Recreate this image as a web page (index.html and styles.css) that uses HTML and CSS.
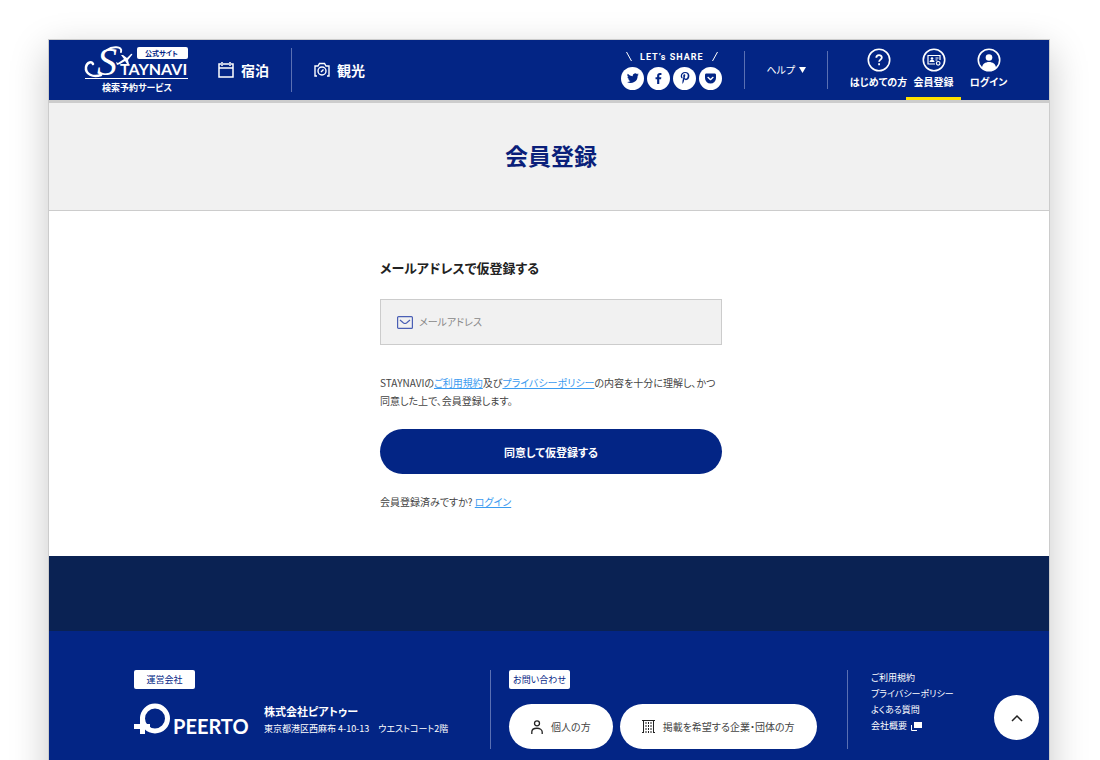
FILE: index.html
```html
<!DOCTYPE html>
<html lang="ja">
<head>
    <meta charset="UTF-8">
    <meta name="viewport" content="width=device-width, initial-scale=1.0">
    <title>会員登録 | STAYNAVI</title>
    <link rel="stylesheet" href="styles.css">
</head>
<body>
    <div class="page">
        <header class="header">
            <a class="logo" href="#">
                <svg width="104" height="48" viewBox="0 0 104 48" fill="#fff" aria-label="STAYNAVI 公式サイト 検索予約サービス">
                    <!-- swash -->
                    <path d="M16 29C8 32 0 28 1 21C2 16 7 15 8 18" fill="none" stroke="#fff" stroke-width="2.500" stroke-linecap="round"/>
                    <path d="M22 4C27 0 38 0 36 6" fill="none" stroke="#fff" stroke-width="2" stroke-linecap="round"/>
                    <text class="logo-s" x="12" y="29">S</text>
                    <!-- plane -->
                    <path d="M33 17L39 13L36 9L38 9L42 12L46 8Q48 7 47 9L43 14L44 18L42 18L40 15L35 18L32 19L31 16Z"/>
                    <text class="logo-name" x="35" y="29">TAYNAVI</text>
                    <rect x="52" y="1" width="51" height="12" rx="2"/>
                    <text class="logo-tag" x="60" y="10">公式サイト</text>
                    <path d="M0 32h103v1H0z"/>
                    <text class="logo-sub" x="17" y="45">検索予約サービス</text>
                </svg>
            </a>
            <nav class="nav">
                <a href="#">
                    <svg width="16" height="16" viewBox="0 0 16 16" fill="none" stroke="#fff" stroke-width="1.500">
                        <path d="M3 2H1v13h14V2h-2M5 2h6M1 6h14M4 0v4M12 0v4"/>
                    </svg>
                    宿泊
                </a>
                <a href="#">
                    <svg width="16" height="16" viewBox="0 0 16 16" fill="none" stroke="#fff" stroke-width="1.400">
                        <path d="M3 14H1V4h3l1.500-2.500h5L12 4h3v10h-2"/>
                        <circle cx="8" cy="9" r="4"/>
                        <path d="M7 10L9.500 7.500"/>
                    </svg>
                    観光
                </a>
            </nav>
            <div class="share">
                <p class="share-title">
                    <svg width="6" height="9" viewBox="0 0 6 9" stroke="#fff"><path d="M.5 0l5 9"/></svg>
                    LET’s SHARE
                    <svg width="6" height="9" viewBox="0 0 6 9" stroke="#fff"><path d="M5.500 0l-5 9"/></svg>
                </p>
                <div class="share-list">
                    <a href="#" aria-label="Twitter">
                        <svg width="12" height="12" viewBox="0 0 24 24"><path d="M23.600 4.900a9.600 9.600 0 0 1-2.800.8 4.900 4.900 0 0 0 2.100-2.700 9.700 9.700 0 0 1-3.100 1.200A4.900 4.900 0 0 0 11.500 8.600 13.800 13.800 0 0 1 1.500 3.500a4.900 4.900 0 0 0 1.500 6.500 4.900 4.900 0 0 1-2.200-.6v.1a4.900 4.900 0 0 0 3.900 4.800 4.900 4.900 0 0 1-2.200.1 4.900 4.900 0 0 0 4.500 3.400A9.800 9.800 0 0 1 0 19.900 13.900 13.900 0 0 0 21.200 7.500a9.900 9.900 0 0 0 2.400-2.600z"/></svg>
                    </a>
                    <a href="#" aria-label="Facebook">
                        <svg width="11" height="11" viewBox="0 0 24 24"><path d="M9 24V13.500H5.500V9H9V6c0-4 2.500-6 6-6 1.600 0 3 .1 3.400.2v4H16c-1.900 0-2.300.9-2.300 2.200V9h4.500l-.6 4.500h-3.900V24z"/></svg>
                    </a>
                    <a href="#" aria-label="Pinterest">
                        <svg width="12" height="12" viewBox="0 0 24 24"><path d="M12.500 0C6.500 0 3.500 4.200 3.500 8c0 2.300.8 4.300 2.700 5 .3.100.6 0 .7-.3l.3-1.100c.1-.3 0-.5-.2-.8-.5-.7-.9-1.500-.9-2.700 0-3.300 2.500-6 6.200-6 3.400 0 5.200 2 5.200 4.800 0 3.600-1.600 6.600-4 6.600-1.300 0-2.300-1.100-2-2.400.4-1.600 1.100-3.300 1.100-4.500 0-1-.6-1.900-1.700-1.900-1.400 0-2.500 1.400-2.500 3.400 0 1.200.4 2 .4 2L7 17.300c-.5 2-.1 4.500 0 6.700 1.500-1.800 2.400-4 2.900-6l.8-3.300c.5 1 1.800 1.700 3.100 1.700 4.100 0 7-3.800 7-8.800C20.800 3.400 17.500 0 12.500 0z"/></svg>
                    </a>
                    <a href="#" aria-label="Pocket">
                        <svg width="11" height="11" viewBox="0 0 24 24"><path d="M3 1h18c1.500 0 3 1.200 3 3v7a12 12 0 0 1-24 0V4c0-1.700 1.300-3 3-3z"/><path d="M6.500 9.500l5.500 5 5.500-5" fill="none" stroke="#fff" stroke-width="3" stroke-linecap="round" stroke-linejoin="round"/></svg>
                    </a>
                </div>
            </div>
            <div class="help">
                <button type="button">ヘルプ
                    <svg width="7" height="6" viewBox="0 0 7 6" fill="#fff"><path d="M0 0h7L3.500 6z"/></svg>
                </button>
            </div>
            <nav class="user-nav">
                <a href="#">
                    <svg width="24" height="24" viewBox="0 0 24 24" fill="none" stroke="#fff" stroke-width="1.800">
                        <circle cx="12" cy="12" r="10.700" stroke-width="1.600"/>
                        <path d="M9.300 9.800c0-3.700 5.500-3.500 5.500-.3 0 2-2.700 2.200-2.700 4.300M12.100 15.300v2"/>
                    </svg>
                    はじめての方
                </a>
                <a class="active" href="#">
                    <svg width="24" height="24" viewBox="0 0 24 24" fill="none" stroke="#fff" stroke-width="1.200">
                        <circle cx="12" cy="12" r="10.700" stroke-width="1.600"/>
                        <path d="M13 16H6V7.500h12V12M13.500 10h3M13.500 12h2"/>
                        <circle cx="10" cy="10.500" r="1.300" fill="#fff" stroke="none"/>
                        <path d="M7.500 14c0-3 5-3 5 0z" fill="#fff" stroke="none"/>
                        <circle cx="16.200" cy="15.300" r="1.800"/>
                    </svg>
                    会員登録
                </a>
                <a href="#">
                    <svg width="24" height="24" viewBox="0 0 24 24" fill="#fff">
                        <circle cx="12" cy="12" r="10.700" fill="none" stroke="#fff" stroke-width="1.600"/>
                        <circle cx="12" cy="9.500" r="3.300"/>
                        <path d="M5 20c0-8 14-8 14 0q-7 5-14 0z"/>
                    </svg>
                    ログイン
                </a>
            </nav>
        </header>

        <main>
            <div class="hero">
                <h1>会員登録</h1>
            </div>
            <form class="signup">
                <h2>メールアドレスで仮登録する</h2>
                <label class="field">
                    <svg width="16" height="13" viewBox="0 0 16 13" fill="none" stroke="#4a5fb5" stroke-width="1.200">
                        <rect x=".6" y=".6" width="14.800" height="11.800" rx="1"/>
                        <path d="M3 4l3.500 3q1.500 1 3 0L13 4"/>
                    </svg>
                    <input type="email" placeholder="メールアドレス" aria-label="メールアドレス">
                </label>
                <p class="terms">STAYNAVIの<a href="#">ご利用規約</a>及び<a href="#">プライバシーポリシー</a>の内容を十分に理解し、かつ同意した上で、会員登録します。</p>
                <button class="submit" type="button">同意して仮登録する</button>
                <p class="login">会員登録済みですか? <a href="#">ログイン</a></p>
            </form>
        </main>

        <div class="band"></div>

        <footer class="footer">
            <section class="company">
                <h3 class="badge">運営会社</h3>
                <div class="company-body">
                    <svg width="116" height="34" viewBox="0 0 116 34" fill="#fff" aria-label="PEERTO">
                        <circle cx="21" cy="15.500" r="12.500" fill="none" stroke="#fff" stroke-width="5"/>
                        <path d="M0 21h16v5H0z"/>
                        <path d="M6 14h5v17H6z"/>
                        <text class="peerto" x="39" y="31">PEERTO</text>
                    </svg>
                    <div>
                        <p class="company-name">株式会社ピアトゥー</p>
                        <p class="address">東京都港区西麻布 4-10-13　ウエストコート2階</p>
                    </div>
                </div>
            </section>
            <section class="contact">
                <h3 class="badge">お問い合わせ</h3>
                <div class="contact-list">
                    <a href="#">
                        <svg width="12" height="14" viewBox="0 0 12 14" fill="none" stroke="#222" stroke-width="1.300">
                            <circle cx="6" cy="3.300" r="2.500"/>
                            <path d="M.8 14v-2c0-5 10.400-5 10.400 0v2"/>
                        </svg>
                        個人の方
                    </a>
                    <a href="#">
                        <svg width="13" height="13" viewBox="0 0 13 13" fill="none" stroke="#222">
                            <path d="M1.500 13V.5h10V13M0 12.500h2M11 12.500h2M0 .5h13"/>
                            <path d="M4 2v11M6.500 2v11M9 2v11" stroke-dasharray="2 1"/>
                        </svg>
                        掲載を希望する企業・団体の方
                    </a>
                </div>
            </section>
            <ul class="links">
                <li><a href="#">ご利用規約</a></li>
                <li><a href="#">プライバシーポリシー</a></li>
                <li><a href="#">よくある質問</a></li>
                <li><a href="#">会社概要
                    <svg width="11" height="9" viewBox="0 0 11 9" fill="#fff"><path d="M3 0h8v6H3z"/><path d="M.5 3v5.500H6" fill="none" stroke="#fff"/></svg>
                </a></li>
            </ul>
        </footer>
    </div>
    <a class="to-top" href="#" aria-label="ページの先頭へ">
        <svg width="12" height="8" viewBox="0 0 12 8" fill="none" stroke="#222" stroke-width="1.500"><path d="M1 7l5-5 5 5"/></svg>
    </a>
</body>
</html>
```
FILE: styles.css
```css
* {
    box-sizing: border-box;
}

body {
    margin: 0;
    background-color: #fff;
    color: #444;
    font-family: "Noto Sans CJK JP", sans-serif;
    font-size: 10px;
    font-feature-settings: "palt";
    line-height: 16px;
}

h1, h2, h3, p, ul {
    margin: 0;
    padding: 0;
}

a {
    color: inherit;
    text-decoration: none;
}

svg {
    flex: none;
}

button,
input {
    font: inherit;
    font-feature-settings: inherit;
}

.page {
    margin: 39px 50px 0 48px;
    border: 1px solid #ccc;
    border-bottom: none;
    box-shadow: 0 12px 36px rgba(0, 0, 0, 0.22);
}

/* header */
.header {
    display: flex;
    align-items: center;
    height: 63px;
    padding: 0 33px 0 36px;
    border-bottom: 3px solid #ccc;
    background-color: #032585;
    color: #fff;
}

.logo svg {
    display: block;
    overflow: visible;
}

.logo-s {
    font: italic 40px "Liberation Serif", serif;
}

.logo-name {
    font: bold 16px Lato, sans-serif;
}

.logo-tag {
    fill: #032585;
    font-size: 7px;
    font-weight: 700;
}

.logo-sub {
    font-size: 9px;
    font-weight: 700;
}

.nav {
    display: flex;
    margin-left: 7px;
}

.nav a {
    display: flex;
    align-items: center;
    gap: 7px;
    height: 44px;
    padding: 0 22px;
    font-size: 14px;
    font-weight: 700;
}

.nav a + a {
    border-left: 1px solid #5a70b3;
}

.share {
    margin-left: auto;
    padding-right: 22px;
}

.share-title {
    display: flex;
    align-items: center;
    justify-content: center;
    gap: 8px;
    font: bold 9px/12px Roboto, "Noto Sans CJK JP", sans-serif;
    letter-spacing: 1px;
}

.share-list {
    display: flex;
    gap: 3px;
    margin-top: 4px;
}

.share-list a {
    display: flex;
    align-items: center;
    justify-content: center;
    width: 23px;
    height: 23px;
    border-radius: 50%;
    background-color: #fff;
    fill: #032585;
}

.help {
    display: flex;
    align-items: center;
    height: 38px;
    padding: 0 21px;
    border: solid #5a70b3;
    border-width: 0 1px;
}

.help button {
    display: flex;
    align-items: center;
    gap: 4px;
    padding: 0;
    border: none;
    background: none;
    color: #fff;
    cursor: pointer;
}

.user-nav {
    display: flex;
    align-self: stretch;
    margin-left: 23px;
}

.user-nav a {
    display: flex;
    flex-direction: column;
    align-items: center;
    gap: 2px;
    width: 55px;
    padding-top: 8px;
    font-weight: 700;
    white-space: nowrap;
}

.user-nav .active {
    border-bottom: 3px solid #ffe100;
}

/* main */
.hero {
    padding: 36px 0 39px 4px;
    border-bottom: 1px solid #ccc;
    background-color: #f1f1f1;
    text-align: center;
}

.hero h1 {
    color: #0a1f7a;
    font-size: 23px;
    font-weight: 700;
    line-height: 32px;
}

.signup {
    width: 346px;
    max-width: 100%;
    margin: 0 auto;
    padding: 47px 0 46px 4px;
}

.signup h2 {
    color: #222;
    font-size: 13px;
    font-weight: 700;
    line-height: 20px;
}

.field {
    display: flex;
    align-items: center;
    gap: 6px;
    height: 46px;
    margin-top: 21px;
    padding: 0 16px;
    border: 1px solid #ccc;
    background-color: #f1f1f1;
}

.field input {
    flex: 1;
    min-width: 0;
    padding: 0;
    border: none;
    outline: none;
    background: none;
    color: #444;
}

.field input::placeholder {
    color: #888;
}

.terms {
    margin-top: 29px;
    line-height: 18px;
}

.terms a,
.login a {
    color: #3b9bf0;
    text-decoration: underline;
}

.submit {
    display: block;
    width: 100%;
    height: 45px;
    margin-top: 19px;
    border: none;
    border-radius: 23px;
    background-color: #032585;
    color: #fff;
    font-size: 11px;
    font-weight: 700;
    cursor: pointer;
}

.login {
    margin-top: 20px;
}

/* footer */
.band {
    height: 75px;
    background-color: #0a2253;
}

.footer {
    display: grid;
    grid-template-columns: 356fr 357fr 202fr;
    padding: 39px 0 40px 85px;
    background-color: #032585;
    color: #fff;
}

.badge {
    display: flex;
    align-items: center;
    justify-content: center;
    width: 61px;
    height: 19px;
    border-radius: 2px;
    background-color: #fff;
    color: #032585;
    font-size: 9px;
    font-weight: 400;
}

.company-body {
    display: flex;
    gap: 14px;
    margin-top: 14px;
}

.company-name {
    font-size: 11px;
    font-weight: 700;
}

.address {
    margin-top: 2px;
    font-size: 9px;
    white-space: nowrap;
}

.peerto {
    font: bold 20px Lato, sans-serif;
}

.contact {
    padding-left: 18px;
    border-left: 1px solid #5a70b3;
}

.contact-list {
    display: flex;
    gap: 7px;
    margin-top: 15px;
}

.contact-list a {
    display: flex;
    align-items: center;
    gap: 8px;
    height: 45px;
    padding: 0 22px;
    border-radius: 23px;
    background-color: #fff;
    color: #444;
    white-space: nowrap;
}

.links {
    padding-left: 23px;
    border-left: 1px solid #5a70b3;
    font-size: 9px;
    list-style: none;
}

.links svg {
    margin-left: 2px;
    vertical-align: middle;
}

.to-top {
    display: flex;
    align-items: center;
    justify-content: center;
    position: fixed;
    right: 61px;
    bottom: 20px;
    width: 45px;
    height: 45px;
    border-radius: 50%;
    background-color: #fff;
}
```
